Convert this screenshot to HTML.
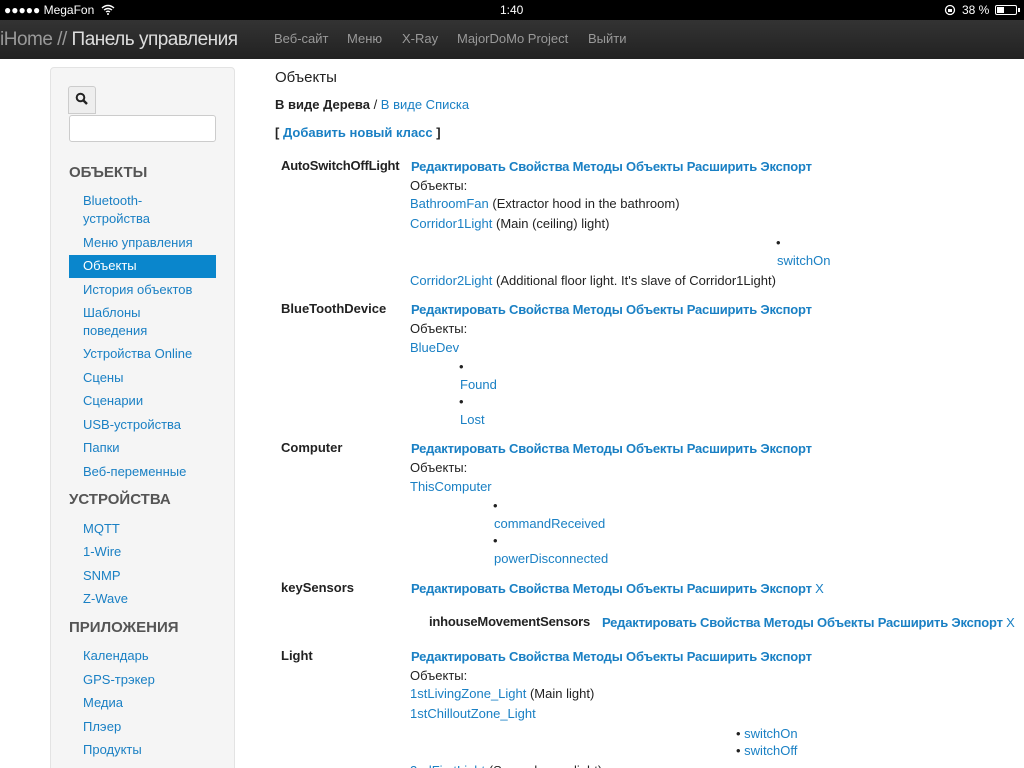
<!DOCTYPE html>
<html><head><meta charset="utf-8"><style>
*{margin:0;padding:0;box-sizing:border-box}
html,body{width:1024px;height:768px;overflow:hidden}
body{background:#fff;position:relative;font-family:"Liberation Sans","DejaVu Sans",sans-serif;font-size:13px;color:#222}
.a{position:absolute;white-space:nowrap;line-height:16px}
.l{color:#1a80c4}
.b{font-weight:bold}
.bl{color:#1a80c4;font-weight:bold;letter-spacing:-0.2px}
.h{font-weight:bold;font-size:15px;color:#555}
.n{color:#999;font-size:13px}
</style></head><body>
<div style="position:absolute;left:0;top:0;width:1024px;height:20px;background:#000;color:#fff;font-size:12px">
<span class="a" style="left:4px;top:2px">●●●●● MegaFon</span>
<svg style="position:absolute;left:101px;top:4px" width="14" height="11" viewBox="0 0 14 11"><path d="M1 4 Q7 -1 13 4 M3 6 Q7 3 11 6 M5 8 Q7 6.5 9 8" stroke="#fff" stroke-width="1.4" fill="none"/><circle cx="7" cy="10" r="1" fill="#fff"/></svg>
<span class="a" style="left:500px;top:2px">1:40</span>
<svg style="position:absolute;left:944px;top:4px" width="12" height="12"><circle cx="6" cy="6" r="4.5" stroke="#fff" fill="none" stroke-width="1.3"/><rect x="4" y="5" width="4" height="3" fill="#fff"/></svg>
<span class="a" style="left:962px;top:2px">38 %</span>
<div style="position:absolute;left:995px;top:5px;width:22px;height:10px;border:1px solid #fff;border-radius:2px"><div style="width:7px;height:6px;margin:1px;background:#fff"></div></div>
<div style="position:absolute;left:1018px;top:8px;width:2px;height:4px;background:#fff"></div>
</div>
<div style="position:absolute;left:0;top:20px;width:1024px;height:39px;background:linear-gradient(#333,#222)">
<span class="a" style="left:0;top:9px;font-size:19px;line-height:22px;color:#999;letter-spacing:-0.5px">iHome // <span style="color:#ddd">Панель управления</span></span>
<span class="a n" style="left:274px;top:11px">Веб-сайт</span>
<span class="a n" style="left:347px;top:11px">Меню</span>
<span class="a n" style="left:402px;top:11px">X-Ray</span>
<span class="a n" style="left:457px;top:11px">MajorDoMo Project</span>
<span class="a n" style="left:588px;top:11px">Выйти</span>
</div>
<div style="position:absolute;left:50px;top:67px;width:185px;height:720px;background:#f5f5f5;border:1px solid #e3e3e3;border-radius:4px"></div>
<div style="position:absolute;left:68px;top:86px;width:28px;height:28px;background:#eee;border:1px solid #ccc;border-radius:3px 3px 0 0"></div>
<svg style="position:absolute;left:75px;top:92px" width="14" height="14"><circle cx="5.5" cy="5.5" r="3.8" stroke="#222" stroke-width="2" fill="none"/><path d="M8.5 8.5 L12 12" stroke="#222" stroke-width="2.4"/></svg>
<div style="position:absolute;left:69px;top:115px;width:147px;height:27px;background:#fff;border:1px solid #ccc;border-radius:3px"></div>
<span class="a h" style="left:69px;top:165px">ОБЪЕКТЫ</span>
<div style="position:absolute;left:69px;top:255px;width:147px;height:23px;background:#0a86cc"></div>
<span class="a l" style="left:83px;top:193px">Bluetooth-</span>
<span class="a l" style="left:83px;top:211px">устройства</span>
<span class="a l" style="left:83px;top:235px">Меню управления</span>
<span class="a" style="left:83px;top:258px;color:#fff">Объекты</span>
<span class="a l" style="left:83px;top:282px">История объектов</span>
<span class="a l" style="left:83px;top:305px">Шаблоны</span>
<span class="a l" style="left:83px;top:323px">поведения</span>
<span class="a l" style="left:83px;top:346px">Устройства Online</span>
<span class="a l" style="left:83px;top:370px">Сцены</span>
<span class="a l" style="left:83px;top:393px">Сценарии</span>
<span class="a l" style="left:83px;top:417px">USB-устройства</span>
<span class="a l" style="left:83px;top:440px">Папки</span>
<span class="a l" style="left:83px;top:464px">Веб-переменные</span>
<span class="a h" style="left:69px;top:492px">УСТРОЙСТВА</span>
<span class="a l" style="left:83px;top:521px">MQTT</span>
<span class="a l" style="left:83px;top:544px">1-Wire</span>
<span class="a l" style="left:83px;top:568px">SNMP</span>
<span class="a l" style="left:83px;top:591px">Z-Wave</span>
<span class="a h" style="left:69px;top:620px">ПРИЛОЖЕНИЯ</span>
<span class="a l" style="left:83px;top:648px">Календарь</span>
<span class="a l" style="left:83px;top:672px">GPS-трэкер</span>
<span class="a l" style="left:83px;top:695px">Медиа</span>
<span class="a l" style="left:83px;top:719px">Плэер</span>
<span class="a l" style="left:83px;top:742px">Продукты</span>

<span class="a" style="left:275px;top:69px;font-size:15px;line-height:18px">Объекты</span>
<span class="a" style="left:275px;top:97px"><b>В виде Дерева</b> / <span class="l">В виде Списка</span></span>
<span class="a b" style="left:275px;top:125px">[ <span class="l">Добавить новый класс</span> ]</span>

<span class="a b" style="left:281px;top:158px;letter-spacing:-0.2px">AutoSwitchOffLight</span>
<span class="a bl" style="left:411px;top:159px">Редактировать Свойства Методы Объекты Расширить Экспорт</span>
<span class="a" style="left:410px;top:178px">Объекты:</span>
<span class="a" style="left:410px;top:196px"><span class="l">BathroomFan</span> (Extractor hood in the bathroom)</span>
<span class="a" style="left:410px;top:216px"><span class="l">Corridor1Light</span> (Main (ceiling) light)</span>
<span class="a" style="left:776px;top:235px">•</span>
<span class="a l" style="left:777px;top:253px">switchOn</span>
<span class="a" style="left:410px;top:273px"><span class="l">Corridor2Light</span> (Additional floor light. It's slave of Corridor1Light)</span>

<span class="a b" style="left:281px;top:301px">BlueToothDevice</span>
<span class="a bl" style="left:411px;top:302px">Редактировать Свойства Методы Объекты Расширить Экспорт</span>
<span class="a" style="left:410px;top:321px">Объекты:</span>
<span class="a l" style="left:410px;top:340px">BlueDev</span>
<span class="a" style="left:459px;top:359px">•</span>
<span class="a l" style="left:460px;top:377px">Found</span>
<span class="a" style="left:459px;top:394px">•</span>
<span class="a l" style="left:460px;top:412px">Lost</span>

<span class="a b" style="left:281px;top:440px">Computer</span>
<span class="a bl" style="left:411px;top:441px">Редактировать Свойства Методы Объекты Расширить Экспорт</span>
<span class="a" style="left:410px;top:460px">Объекты:</span>
<span class="a l" style="left:410px;top:479px">ThisComputer</span>
<span class="a" style="left:493px;top:498px">•</span>
<span class="a l" style="left:494px;top:516px">commandReceived</span>
<span class="a" style="left:493px;top:533px">•</span>
<span class="a l" style="left:494px;top:551px">powerDisconnected</span>

<span class="a b" style="left:281px;top:580px">keySensors</span>
<span class="a bl" style="left:411px;top:581px">Редактировать Свойства Методы Объекты Расширить Экспорт <span style="font-weight:normal">X</span></span>
<span class="a b" style="left:429px;top:614px;letter-spacing:-0.2px">inhouseMovementSensors</span>
<span class="a bl" style="left:602px;top:615px">Редактировать Свойства Методы Объекты Расширить Экспорт <span style="font-weight:normal">X</span></span>

<span class="a b" style="left:281px;top:648px">Light</span>
<span class="a bl" style="left:411px;top:649px">Редактировать Свойства Методы Объекты Расширить Экспорт</span>
<span class="a" style="left:410px;top:668px">Объекты:</span>
<span class="a" style="left:410px;top:686px"><span class="l">1stLivingZone_Light</span> (Main light)</span>
<span class="a l" style="left:410px;top:706px">1stChilloutZone_Light</span>
<span class="a" style="left:736px;top:726px">• <span class="l">switchOn</span></span>
<span class="a" style="left:736px;top:743px">• <span class="l">switchOff</span></span>
<span class="a" style="left:410px;top:763px"><span class="l">2ndFirstLight</span> (Second room light)</span>
</body></html>
